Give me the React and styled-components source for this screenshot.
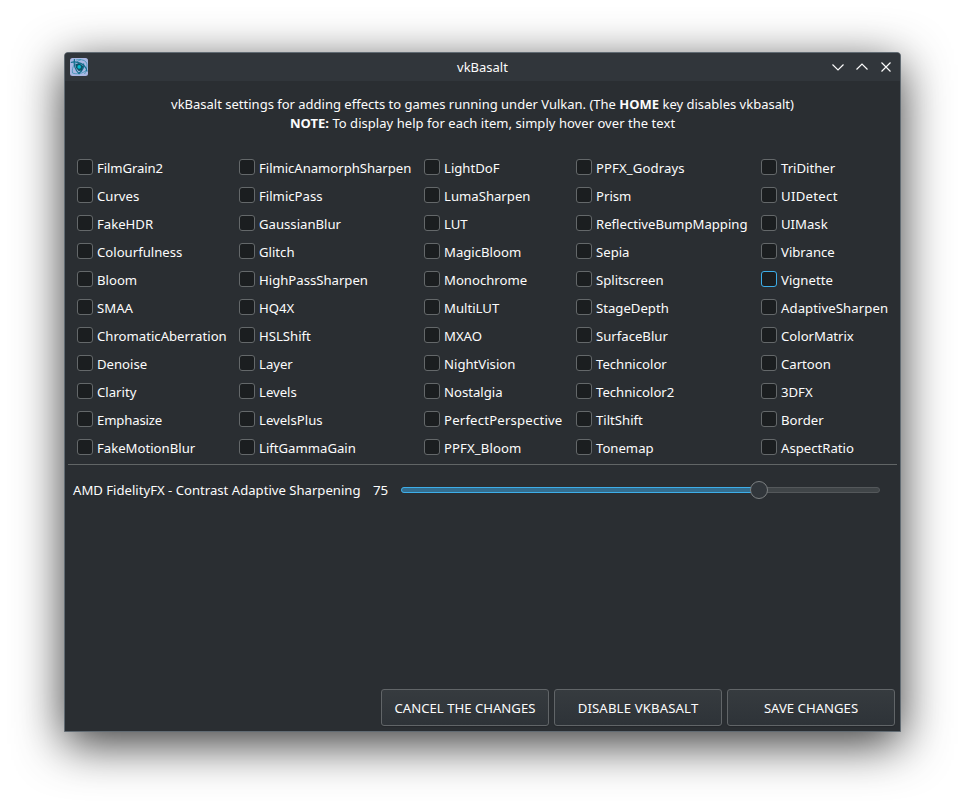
import React from "react";
import styled, { createGlobalStyle } from "styled-components";

const GlobalStyle = createGlobalStyle`
  *, *::before, *::after { box-sizing: border-box; }
  body {
    margin: 0;
    background: #fff;
    overflow: hidden;
    font-family: "Noto Sans", sans-serif;
    font-size: 13px;
    color: #fcfcfc;
  }
`;

const Desktop = styled.div`
  height: 808px;
  padding: 52px 64px 76px;
`;

const Window = styled.main`
  display: flex;
  flex-direction: column;
  width: 837px;
  height: 680px;
  border: 1px solid #616b73;
  border-radius: 4px 4px 0 0;
  background: #2a2e32;
  box-shadow: 0 12px 48px rgba(0, 0, 0, 0.78);
`;

const TitleBar = styled.header`
  display: grid;
  grid-template-columns: 80px 1fr 80px;
  align-items: center;
  height: 28px;
  flex: none;
  padding: 0 5px;
  border-radius: 3px 3px 0 0;
  background: #31363b;
`;

const Title = styled.h1`
  margin: 0;
  font-size: inherit;
  font-weight: 400;
  text-align: center;
`;

const AppIcon = styled.svg`
  display: block;
  width: 18px;
  height: 18px;
`;

const WindowControls = styled.div`
  display: flex;
  justify-content: flex-end;
  gap: 8px;
  padding-right: 1px;

  svg {
    display: block;
    width: 16px;
    height: 16px;
    fill: none;
    stroke: #fcfcfc;
    stroke-width: 1.15;
  }
`;

const Intro = styled.div`
  margin: 14px 0 0;
  line-height: 19px;
  height: 38px;
  text-align: center;
`;

const IntroLine = styled.p`
  margin: 0;
  letter-spacing: ${(p) => p.$tracking || "normal"};
`;

const EffectGrid = styled.section`
  display: grid;
  grid-template-columns: 162px 185px 152px 185px 130px;
  grid-template-rows: repeat(11, 28px);
  grid-auto-flow: column;
  margin: 21px 0 0 12px;
  font-size: 13.15px;
`;

const EffectItem = styled.label`
  display: flex;
  align-items: center;
  gap: 4px;
  white-space: nowrap;
`;

const CheckBox = styled.span`
  width: 16px;
  height: 16px;
  flex: none;
  margin-bottom: 2px;
  border: 1px solid ${(p) => (p.$focused ? "#3daee9" : "#64686a")};
  border-radius: 3px;
  background: #1b1e20;
`;

const EffectName = styled.span`
  line-height: 18px;
  letter-spacing: ${(p) => p.$tracking || "normal"};
`;

const Separator = styled.hr`
  width: 829px;
  height: 1px;
  margin: 2px 3px 0;
  flex: none;
  border: 0;
  background: #616566;
`;

const SharpenRow = styled.section`
  display: flex;
  align-items: center;
  height: 20px;
  margin: 15px 20px 0 8px;
  font-size: 13.13px;
`;

const SharpenLabel = styled.span`
  width: 300px;
  white-space: nowrap;
`;

const SharpenValue = styled.span`
  width: 28px;
  font-size: 13.333px;
`;

const Slider = styled.div`
  position: relative;
  width: 479px;
  height: 6px;
  border: 1px solid #54585b;
  border-radius: 3px;
  background: #404548;
`;

const SliderFill = styled.div`
  position: absolute;
  left: -1px;
  top: -1px;
  width: 358px;
  height: 6px;
  border: 1px solid #3daee9;
  border-radius: 3px;
  background: #346d8e;
`;

const SliderKnob = styled.div`
  position: absolute;
  left: 348px;
  top: -7px;
  width: 18px;
  height: 18px;
  border: 1px solid #7b7f81;
  border-radius: 50%;
  background: #31363b;
`;

const Actions = styled.footer`
  display: flex;
  justify-content: flex-end;
  gap: 5px;
  margin-top: auto;
  padding: 0 5px 5px;
`;

const ActionButton = styled.button`
  width: 168px;
  height: 37px;
  padding: 1px 0 0;
  border: 1px solid #616568;
  border-radius: 3px;
  background: linear-gradient(#363b3f, #2e3338);
  box-shadow: 0 1px 1px rgba(0, 0, 0, 0.15);
  color: inherit;
  font: inherit;
  font-size: 13.15px;
  letter-spacing: ${(p) => p.$tracking || "normal"};
`;

const EFFECTS = [
  "FilmGrain2", "Curves", "FakeHDR", "Colourfulness", "Bloom", "SMAA",
  "ChromaticAberration", "Denoise", "Clarity", "Emphasize", "FakeMotionBlur",
  "FilmicAnamorphSharpen", "FilmicPass", "GaussianBlur", "Glitch",
  "HighPassSharpen", "HQ4X", "HSLShift", "Layer", "Levels", "LevelsPlus",
  "LiftGammaGain",
  "LightDoF", "LumaSharpen", "LUT", "MagicBloom", "Monochrome", "MultiLUT",
  "MXAO", "NightVision", "Nostalgia", "PerfectPerspective", "PPFX_Bloom",
  "PPFX_Godrays", "Prism", "ReflectiveBumpMapping", "Sepia", "Splitscreen",
  "StageDepth", "SurfaceBlur", "Technicolor", "Technicolor2", "TiltShift",
  "Tonemap",
  "TriDither", "UIDetect", "UIMask", "Vibrance", "Vignette",
  "AdaptiveSharpen", "ColorMatrix", "Cartoon", "3DFX", "Border",
  "AspectRatio",
];

const TRACKING = {
  FilmGrain2: "-0.1px",
  FilmicAnamorphSharpen: "-0.04px",
  PerfectPerspective: "0.2px",
  PPFX_Bloom: "0.1px",
  PPFX_Godrays: "0.1px",
  AdaptiveSharpen: "0.08px",
  UIDetect: "0.3px",
  Emphasize: "-0.15px",
};

function AtomIcon() {
  return (
    <AppIcon viewBox="0 0 18 18" aria-hidden="true">
      <rect width="18" height="18" rx="2.5" fill="#a9b7e2" />
      <g fill="none" stroke="#3b93b3" strokeWidth="0.8">
        <path d="M11 1.5C5 4 1.5 9 2.5 15c4 1.5 10 1 14-3" />
        <path d="M6 2c3-1 8-.5 10 2s.5 9-1.5 12" />
      </g>
      <g fill="none" stroke="#14708e" strokeWidth="1.3">
        <path d="M.8 4.5C5 3 11 4.5 14 7.5s3 5.5 3 6" />
        <path d="M4.5 1C3.5 6 5 12 9.5 16" />
        <path d="M13.5 5.5C14 9 12 13 9 15" />
      </g>
      <path d="M5.3 6.2 9 5l4.3 3.2-1.5 4.2-3.1.7-2.6-3Z" fill="#0d5369" />
      <circle cx="9.2" cy="8.9" r="1.8" fill="#04bfd0" />
    </AppIcon>
  );
}

export default function App() {
  return (
    <>
      <GlobalStyle />
      <Desktop>
        <Window>
          <TitleBar>
            <AtomIcon />
            <Title>vkBasalt</Title>
            <WindowControls>
              <svg viewBox="0 0 16 16"><path d="M2.5 5.5 8 11l5.5-5.5" /></svg>
              <svg viewBox="0 0 16 16"><path d="M2.5 10.5 8 5l5.5 5.5" /></svg>
              <svg viewBox="0 0 16 16"><path d="m3.5 3.5 9 9m0-9-9 9" /></svg>
            </WindowControls>
          </TitleBar>
          <Intro>
            <IntroLine>
              vkBasalt settings for adding effects to games running under Vulkan.
              (The <b>HOME</b> key disables vkbasalt)
            </IntroLine>
            <IntroLine $tracking="0.045px">
              <b>NOTE:</b> To display help for each item, simply hover over the text
            </IntroLine>
          </Intro>
          <EffectGrid>
            {EFFECTS.map((name) => (
              <EffectItem key={name}>
                <CheckBox $focused={name === "Vignette"} />
                <EffectName $tracking={TRACKING[name]}>{name}</EffectName>
              </EffectItem>
            ))}
          </EffectGrid>
          <Separator />
          <SharpenRow>
            <SharpenLabel>AMD FidelityFX - Contrast Adaptive Sharpening</SharpenLabel>
            <SharpenValue>75</SharpenValue>
            <Slider>
              <SliderFill />
              <SliderKnob />
            </Slider>
          </SharpenRow>
          <Actions>
            <ActionButton>CANCEL THE CHANGES</ActionButton>
            <ActionButton $tracking="0.15px">DISABLE VKBASALT</ActionButton>
            <ActionButton>SAVE CHANGES</ActionButton>
          </Actions>
        </Window>
      </Desktop>
    </>
  );
}
